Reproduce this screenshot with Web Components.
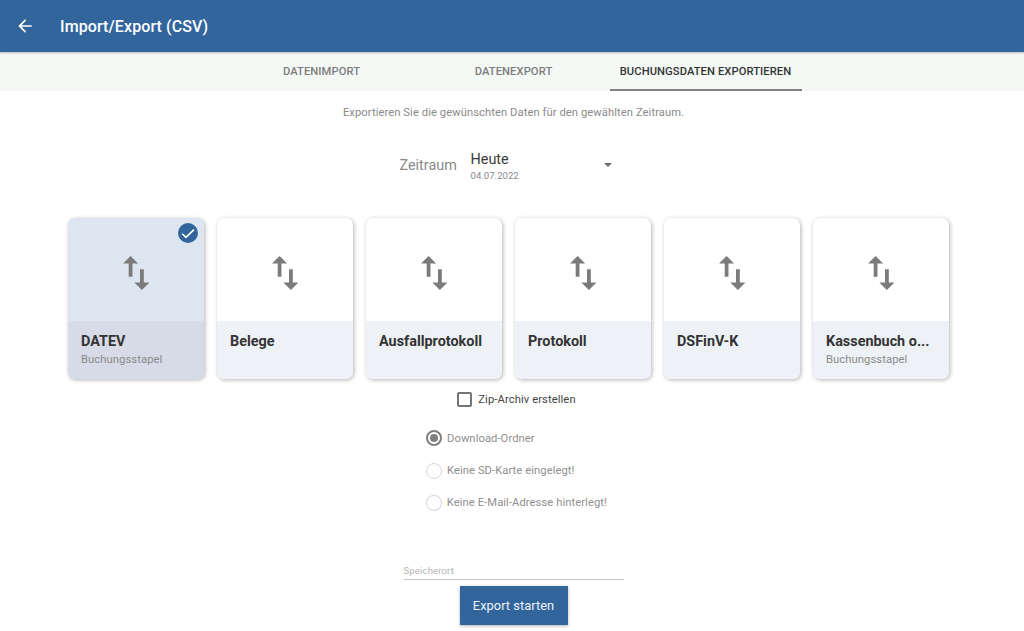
<!DOCTYPE html>
<html lang="de">
<head>
<meta charset="utf-8">
<title>Import/Export (CSV)</title>
<style>
  html, body { margin: 0; height: 100%; background: #fff; overflow: hidden; }
  body { font-family: Roboto, "Liberation Sans", sans-serif; }
</style>
</head>
<body>
<export-app></export-app>

<script>
const ARROWS = `
  <svg width="26.5" height="34" viewBox="5 3 14 18">
    <path fill="#7b7b7b" d="M16 17.01V10h-2v7.01h-3L15 21l4-3.99h-3zM9 3L5 6.99h3V14h2V6.99h3L9 3z"/>
  </svg>`;

class AppBar extends HTMLElement {
  constructor() {
    super();
    this.attachShadow({ mode: 'open' });
  }
  connectedCallback() {
    this.shadowRoot.innerHTML = `
      <style>
        :host { display: flex; align-items: center; height: 52px; background: #32659c; color: #fff; box-shadow: 0 1px 2px rgba(0,0,0,.25); position: relative; }
        svg { margin-left: 15px; display: block; }
        h1 { margin: 0 0 0 25px; font-size: 16px; font-weight: 500; letter-spacing: .1px; }
      </style>
      <svg width="20" height="20" viewBox="0 0 24 24"><path fill="#fff" d="M20 11H7.83l5.59-5.59L12 4l-8 8 8 8 1.41-1.41L7.83 13H20v-2z"/></svg>
      <h1><slot></slot></h1>
    `;
  }
}

class TabBar extends HTMLElement {
  constructor() {
    super();
    this.attachShadow({ mode: 'open' });
  }
  connectedCallback() {
    this.shadowRoot.innerHTML = `
      <style>
        :host { display: flex; justify-content: center; height: 39px; background: #f4f9f6; padding-left: 3px; }
      </style>
      <slot></slot>
    `;
  }
}

class TabItem extends HTMLElement {
  constructor() {
    super();
    this.attachShadow({ mode: 'open' });
  }
  connectedCallback() {
    this.shadowRoot.innerHTML = `
      <style>
        :host { display: flex; align-items: center; justify-content: center; box-sizing: border-box; width: 192px; height: 39px; font-size: 11.2px; font-weight: 500; letter-spacing: .08px; color: #7c7c7c; }
        :host([active]) { color: #333; border-bottom: 2px solid #808080; padding-top: 2px; }
      </style>
      <slot></slot>
    `;
  }
}

class PeriodSelect extends HTMLElement {
  constructor() {
    super();
    this.attachShadow({ mode: 'open' });
  }
  connectedCallback() {
    this.shadowRoot.innerHTML = `
      <style>
        :host { display: flex; align-items: center; justify-content: center; height: 40px; }
        .label { font-size: 14.4px; color: #8a8a8a; width: 71px; margin-top: -3px; }
        .value { width: 131px; }
        .main { font-size: 14.4px; color: #3a3a3a; line-height: 18px; }
        .sub { font-size: 9.6px; color: #8a8a8a; line-height: 14px; }
        .caret { width: 0; height: 0; border: 4px solid transparent; border-top: 4px solid #6d6d6d; border-bottom: 0; margin: -5px 0 0 2px; }
      </style>
      <span class="label">${this.getAttribute('label')}</span>
      <div class="value"><div class="main">${this.getAttribute('value')}</div><div class="sub">${this.getAttribute('date')}</div></div>
      <div class="caret"></div>
    `;
  }
}

class ExportCard extends HTMLElement {
  constructor() {
    super();
    this.attachShadow({ mode: 'open' });
  }
  connectedCallback() {
    const name = this.getAttribute('name') || '';
    const sub = this.getAttribute('sub') || '';
    this.shadowRoot.innerHTML = `
      <style>
        :host { display: flex; flex-direction: column; position: relative; width: 136px; height: 161px; border-radius: 7px; overflow: hidden; background: #fff; box-shadow: 1px 1px 4px rgba(0,0,0,.3); }
        .top { height: 103px; display: flex; align-items: center; justify-content: center; padding-top: 6px; box-sizing: border-box; }
        .top svg { display: block; }
        .bottom { flex: 1; background: #eef1f6; padding: 12px 13px 0; min-width: 0; }
        .name { font-size: 14.4px; font-weight: 700; color: #333; line-height: 18px; white-space: nowrap; }
        .sub { font-size: 11.2px; color: #8a8a8a; line-height: 14px; margin-top: 2px; letter-spacing: .1px; }
        :host([selected]) { background: #dde6f0; }
        :host([selected]) .bottom { background: #d6dbe7; }
        .check { position: absolute; top: 5px; right: 6px; display: block; }
      </style>
      <div class="top">${ARROWS}</div>
      <div class="bottom">
        <div class="name">${name}</div>
        ${sub ? `<div class="sub">${sub}</div>` : ''}
      </div>
      ${this.hasAttribute('selected') ? `<svg class="check" width="20" height="20" viewBox="0 0 20 20"><circle cx="10" cy="10" r="10" fill="#32659c"/><path fill="none" stroke="#fff" stroke-width="1.6" d="M4.2 10.8 L7.9 14.4 L16 6.6"/></svg>` : ''}
    `;
  }
}

class CheckField extends HTMLElement {
  constructor() {
    super();
    this.attachShadow({ mode: 'open' });
  }
  connectedCallback() {
    this.shadowRoot.innerHTML = `
      <style>
        :host { display: flex; align-items: center; justify-content: center; height: 20px; font-size: 11.2px; letter-spacing: .1px; color: #444; }
        .box { box-sizing: border-box; width: 15px; height: 15px; border: 2px solid #757575; border-radius: 2px; margin-right: 6px; }
      </style>
      <span class="box"></span><slot></slot>
    `;
  }
}

class RadioOption extends HTMLElement {
  constructor() {
    super();
    this.attachShadow({ mode: 'open' });
  }
  connectedCallback() {
    this.shadowRoot.innerHTML = `
      <style>
        :host { display: flex; align-items: center; height: 32.4px; font-size: 11.2px; letter-spacing: .08px; color: #8f8f8f; white-space: nowrap; }
        .dot { box-sizing: border-box; width: 16px; height: 16px; border-radius: 50%; border: 1.5px solid #d6d6d6; margin-right: 5px; display: flex; align-items: center; justify-content: center; }
        :host([checked]) .dot { border: 2px solid #808080; }
        :host([checked]) .dot::after { content: ""; width: 8px; height: 8px; border-radius: 50%; background: #808080; }
      </style>
      <span class="dot"></span><slot></slot>
    `;
  }
}

class PathField extends HTMLElement {
  constructor() {
    super();
    this.attachShadow({ mode: 'open' });
  }
  connectedCallback() {
    this.shadowRoot.innerHTML = `
      <style>
        :host { display: block; box-sizing: border-box; width: 220px; height: 17px; border-bottom: 1px solid #c8c8c8; font-size: 9.6px; line-height: 15px; letter-spacing: .12px; color: #b5b5b5; }
      </style>
      <slot></slot>
    `;
  }
}

class PrimaryButton extends HTMLElement {
  constructor() {
    super();
    this.attachShadow({ mode: 'open' });
  }
  connectedCallback() {
    this.shadowRoot.innerHTML = `
      <style>
        :host { display: flex; align-items: center; justify-content: center; width: 108px; height: 39px; background: #32659c; color: #eef3f8; font-size: 12.8px; letter-spacing: .05px; box-shadow: 0 1px 3px rgba(0,0,0,.3); }
      </style>
      <slot></slot>
    `;
  }
}

class ExportApp extends HTMLElement {
  constructor() {
    super();
    this.attachShadow({ mode: 'open' });
  }
  connectedCallback() {
    this.shadowRoot.innerHTML = `
      <style>
        :host { display: block; height: 631px; overflow: hidden; color: #333; }
        main { display: flex; flex-direction: column; align-items: center; }
        .hint { margin: 14px 0 0 3px; font-size: 11.2px; line-height: 15px; letter-spacing: .08px; color: #8a8a8a; }
        period-select { margin: 27px 15px 0 2px; }
        .cards { display: flex; gap: 13px; margin: 31px 7px 0 0; }
        check-field { margin: 10px 0 0 9px; }
        .radios { display: flex; flex-direction: column; margin: 13px 0 0 9px; width: 181px; }
        path-field { margin: 44px 0 0 3px; }
        primary-button { margin: 6px 0 0 3px; }
      </style>
      <app-bar>Import/Export (CSV)</app-bar>
      <tab-bar>
        <tab-item>DATENIMPORT</tab-item>
        <tab-item>DATENEXPORT</tab-item>
        <tab-item active>BUCHUNGSDATEN EXPORTIEREN</tab-item>
      </tab-bar>
      <main>
        <p class="hint">Exportieren Sie die gewünschten Daten für den gewählten Zeitraum.</p>
        <period-select label="Zeitraum" value="Heute" date="04.07.2022"></period-select>
        <div class="cards">
          <export-card name="DATEV" sub="Buchungsstapel" selected></export-card>
          <export-card name="Belege"></export-card>
          <export-card name="Ausfallprotokoll"></export-card>
          <export-card name="Protokoll"></export-card>
          <export-card name="DSFinV-K"></export-card>
          <export-card name="Kassenbuch o..." sub="Buchungsstapel"></export-card>
        </div>
        <check-field>Zip-Archiv erstellen</check-field>
        <div class="radios">
          <radio-option checked>Download-Ordner</radio-option>
          <radio-option>Keine SD-Karte eingelegt!</radio-option>
          <radio-option>Keine E-Mail-Adresse hinterlegt!</radio-option>
        </div>
        <path-field>Speicherort</path-field>
        <primary-button>Export starten</primary-button>
      </main>
    `;
  }
}

customElements.define('app-bar', AppBar);
customElements.define('tab-bar', TabBar);
customElements.define('tab-item', TabItem);
customElements.define('period-select', PeriodSelect);
customElements.define('export-card', ExportCard);
customElements.define('check-field', CheckField);
customElements.define('radio-option', RadioOption);
customElements.define('path-field', PathField);
customElements.define('primary-button', PrimaryButton);
customElements.define('export-app', ExportApp);
</script>
</body>
</html>
